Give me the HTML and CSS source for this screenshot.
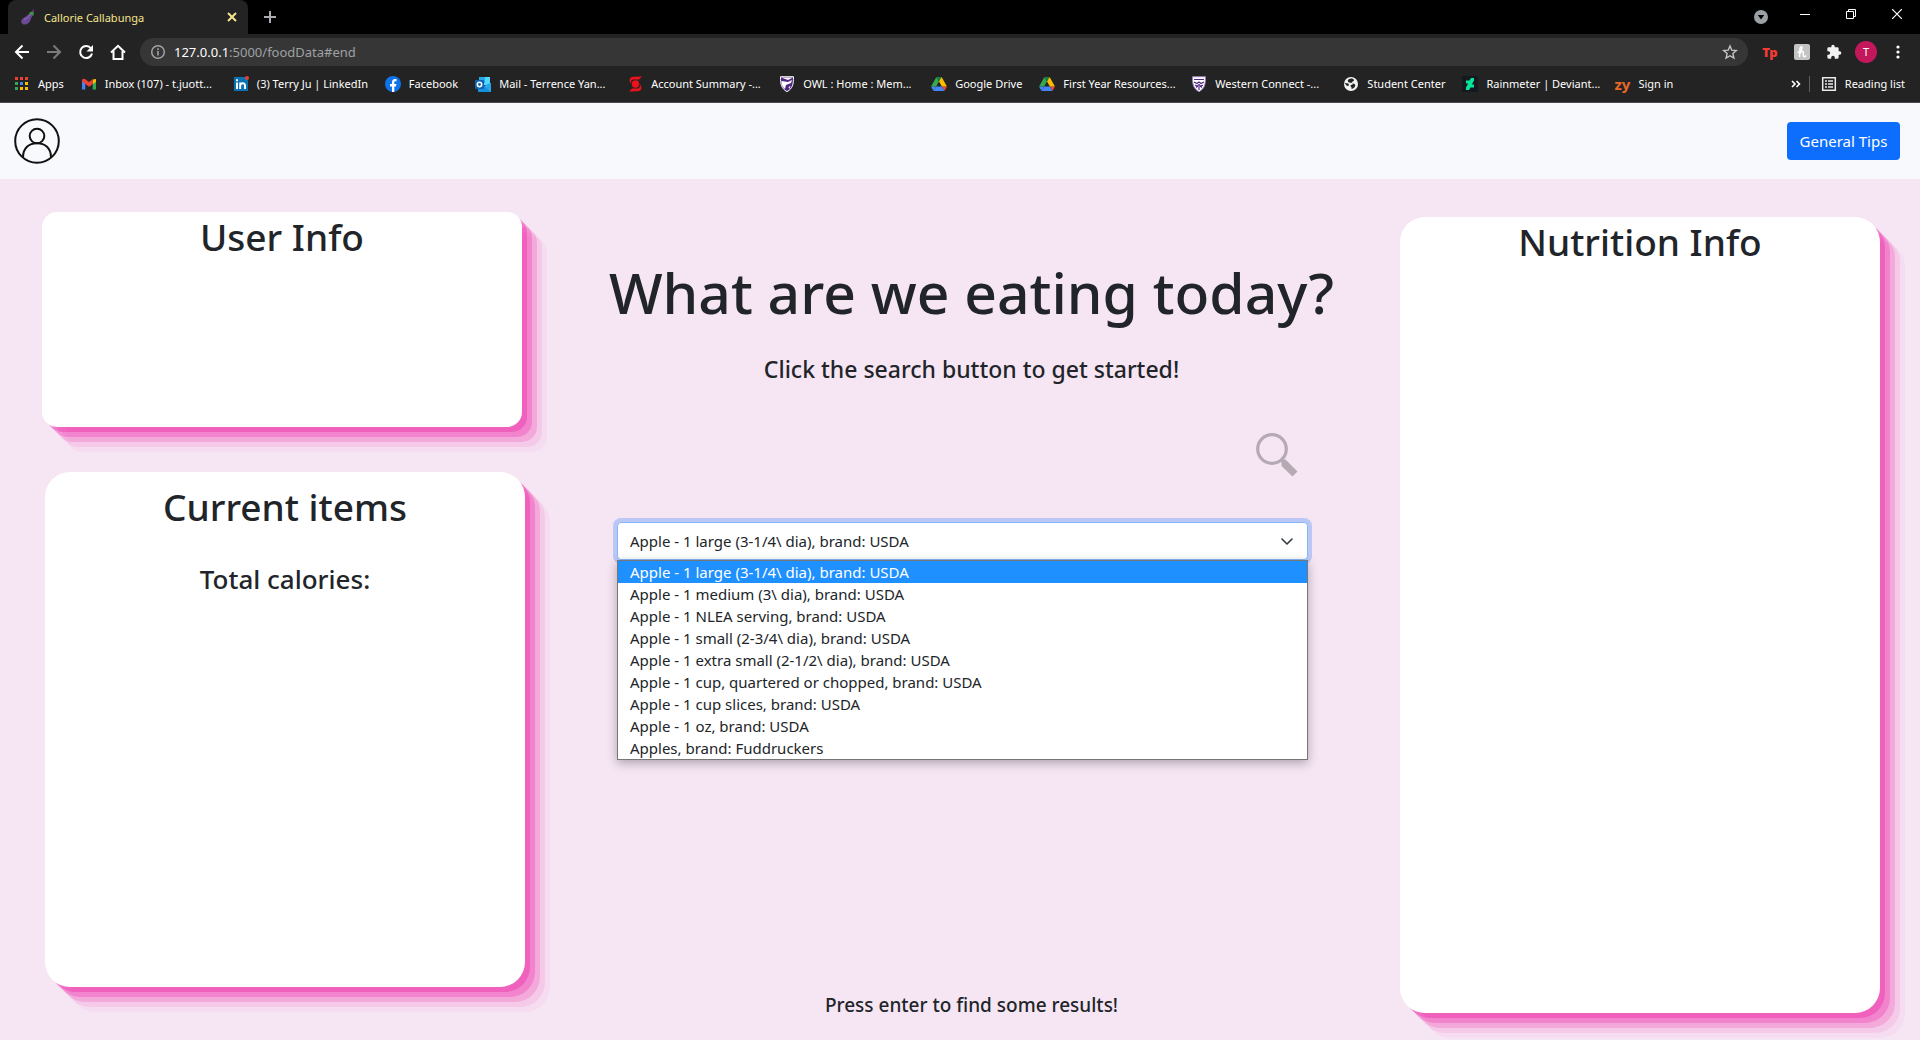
FILE: index.html
```html
<!DOCTYPE html>
<html lang="en">
<head>
<meta charset="utf-8">
<title>Callorie Callabunga</title>
<link rel="stylesheet" href="styles.css">
</head>
<body>
<!-- browser window -->
<div class="browser">
  <div class="tabstrip">
    <div class="tab">
      <svg width="16" height="16" viewBox="0 0 16 16"><path d="M11 3C9 4 8.500 6 6 7.500C3 9 .8 10.500 1.200 13C1.700 15.800 5.500 16.300 8 14.500C11 12.300 10.500 9.500 12 7.500C13 6 13.500 5 12.800 4Z" fill="#6a4a94"/><path d="M4 10.500C6 9.500 8.500 8.500 10 5.500" stroke="#9070b8" fill="none"/><path d="M9.500 3.500L13.500 2L13.800 7L12 5.500L10.500 6Z" fill="#3e9b3b"/><path d="M12.500 3L13.500 .5" stroke="#6d2b7a" stroke-width="1.500"/></svg>
      <span class="tab-title">Callorie Callabunga</span>
      <button class="tab-close" aria-label="Close tab"><svg width="10" height="10" viewBox="0 0 10 10"><path d="M1 1l8 8M9 1L1 9" stroke="#f5e58d" stroke-width="2"/></svg></button>
    </div>
    <button class="new-tab" aria-label="New tab"><svg width="12" height="12" viewBox="0 0 12 12"><path d="M6 0v12M0 6h12" stroke="#a9adb2" stroke-width="2"/></svg></button>
    <button class="tab-search" aria-label="Search tabs"><svg width="14" height="14" viewBox="0 0 14 14"><circle cx="7" cy="7" r="7" fill="#9aa0a6"/><path d="M3.800 5h6.400L7 9.500z" fill="#000"/></svg></button>
    <div class="window-buttons">
      <button aria-label="Minimize"><svg width="10" height="10" viewBox="0 0 10 10"><path d="M0 5.500h10" stroke="#fff"/></svg></button>
      <button aria-label="Restore"><svg width="10" height="10" viewBox="0 0 10 10"><path d="M.5 2.500h7v7h-7zM2.500 2.500v-2h7v7h-2" stroke="#fff" fill="none"/></svg></button>
      <button aria-label="Close"><svg width="10" height="10" viewBox="0 0 10 10"><path d="M0 0l10 10M10 0L0 10" stroke="#fff" stroke-width="1.200"/></svg></button>
    </div>
  </div>

  <div class="toolbar">
    <div class="tools">
      <button aria-label="Back"><svg width="16" height="16" viewBox="0 0 16 16"><path d="M15 8H2.500M8.500 1.500L2 8l6.500 6.500" stroke="#fff" stroke-width="2" fill="none"/></svg></button>
      <button aria-label="Forward"><svg width="16" height="16" viewBox="0 0 16 16"><path d="M1 8h12.500M7.500 1.500L14 8l-6.500 6.500" stroke="#7b7b7b" stroke-width="2" fill="none"/></svg></button>
      <button aria-label="Reload"><svg width="16" height="16" viewBox="0 0 16 16"><path d="M13 4.500A6 6 0 1 0 14 9.500" stroke="#fff" stroke-width="2" fill="none"/><path d="M15 1v6.500H8.500z" fill="#fff"/></svg></button>
      <button aria-label="Home"><svg width="16" height="16" viewBox="0 0 16 16"><path d="M1 8.500L8 1.800l7 6.700M3.500 7v8h9V7" stroke="#fff" stroke-width="2" fill="none"/></svg></button>
    </div>
    <div class="omnibox">
      <svg width="16" height="16" viewBox="0 0 16 16"><circle cx="8" cy="8" r="6.300" stroke="#a0a3a7" stroke-width="1.500" fill="none"/><path d="M8 7v4.500M8 4.200v1.700" stroke="#a0a3a7" stroke-width="1.600"/></svg>
      <label class="host" for="address">127.0.0.1</label>
      <input class="address" id="address" type="text" value=":5000/foodData#end">
      <button class="star" aria-label="Bookmark this tab"><svg width="16" height="16" viewBox="0 0 16 16"><path d="M8 2l1.800 4.200 4.500.4-3.400 3 1 4.400L8 11.700 4.100 14l1-4.400-3.400-3 4.500-.4z" stroke="#c4c7ca" stroke-width="1.400" fill="none"/></svg></button>
    </div>
    <div class="tools">
      <button class="tp" aria-label="Tp extension">Tp</button>
      <button aria-label="Honey"><svg width="16" height="16" viewBox="0 0 16 16"><rect width="16" height="16" rx="2" fill="#c3c3c3"/><path d="M3.500 8.500C7 7.500 9 3.500 7.500 2.800C6 2.300 5.500 6 5.500 13M5.500 10.500C6.500 7 9.300 6.500 9.300 8.500V11c0 2.300 1.700 2 2.700.5" stroke="#fff" stroke-width="1.500" fill="none"/></svg></button>
      <button aria-label="Extensions"><svg width="16" height="16" viewBox="0 0 24 24"><path d="M20.500 11H19V7a2 2 0 0 0-2-2h-4V3.500a2.500 2.500 0 0 0-5 0V5H4a2 2 0 0 0-2 2v3.800h1.500a2.700 2.700 0 0 1 0 5.400H2V20a2 2 0 0 0 2 2h3.800v-1.500a2.700 2.700 0 0 1 5.400 0V22H17a2 2 0 0 0 2-2v-4h1.500a2.500 2.500 0 0 0 0-5z" fill="#f1f1f1"/></svg></button>
      <button aria-label="Profile"><span class="avatar">T</span></button>
      <button aria-label="Menu"><svg width="4" height="14" viewBox="0 0 4 14"><circle cx="2" cy="2" r="1.600" fill="#fff"/><circle cx="2" cy="7" r="1.600" fill="#fff"/><circle cx="2" cy="12" r="1.600" fill="#fff"/></svg></button>
    </div>
  </div>

  <nav class="bookmarks">
    <a href="#"><svg width="16" height="16" viewBox="0 0 16 16"><path d="M1 1h3v3H1zM6 1h3v3H6zM11 1h3v3h-3z" fill="#ea4335"/><path d="M1 6h3v3H1zM1 11h3v3H1z" fill="#34a853"/><path d="M6 6h3v3H6z" fill="#4285f4"/><path d="M6 11h3v3H6zM11 6h3v3h-3zM11 11h3v3h-3z" fill="#fbbc05"/></svg><span>Apps</span></a>
    <a href="#" class="long"><svg width="16" height="16" viewBox="0 0 16 16"><path d="M1 4v9.500h3.300V6z" fill="#4285f4"/><path d="M15 4v9.500h-3.300V6z" fill="#34a853"/><path d="M11.700 3.500L15 3v2.700l-3.300 2.500z" fill="#fbbc04"/><path d="M1 4.500C1 2.500 3 2.200 4.300 3.300L8 6l3.700-2.700V8L8 10.700 1 5.500z" fill="#ea4335"/></svg><span>Inbox (107) - t.juott...</span></a>
    <a href="#" class="long"><svg width="16" height="16" viewBox="0 0 16 16"><rect x="1" y="1" width="14" height="14" fill="#0a71b3"/><path d="M4 6.500V13M4 3.200v2M7.200 6.500V13M7.200 9.500C7.200 7 12 6 12 9.500V13" stroke="#fff" stroke-width="1.900" fill="none"/><circle cx="14" cy="2" r="2" fill="#e8402f"/></svg><span>(3) Terry Ju | LinkedIn</span></a>
    <a href="#"><svg width="16" height="16" viewBox="0 0 16 16"><circle cx="8" cy="8" r="8" fill="#0f73ea"/><path d="M7 16v-5.500H5V8h2V6.300C7 4 8.300 3 10 3l1.500.1v2.100h-1c-1 0-1.200.5-1.200 1.300V8h2.100l-.4 2.500H9.300V16z" fill="#fff"/></svg><span>Facebook</span></a>
    <a href="#" class="long"><svg width="16" height="16" viewBox="0 0 16 16"><path d="M4 1h11v8H4z" fill="#50d9ff"/><path d="M4 1h6v6H4z" fill="#28a8ea"/><path d="M3 8l6 2 7-3v9H3z" fill="#1490df"/><path d="M9 10l7-3v9z" fill="#28a8ea"/><rect y="4" width="9" height="9" rx="1" fill="#0f63b5"/><circle cx="4.500" cy="8.500" r="2.200" stroke="#fff" stroke-width="1.500" fill="none"/></svg><span>Mail - Terrence Yan...</span></a>
    <a href="#" class="long"><svg width="16" height="16" viewBox="0 0 16 16"><path d="M15 .5l-3 3H6.500C4 3.500 3.500 6 4.500 8C1.500 5.500 2 .7 6.500.7zM2 15.500l3-3h5.500c2.500 0 3-2.500 2-4.500c3 2.500 2.500 7.300-2 7.300z" fill="#ec111a"/><circle cx="8.500" cy="8" r="3.700" fill="#ec111a"/></svg><span>Account Summary -...</span></a>
    <a href="#" class="long"><svg width="16" height="16" viewBox="0 0 16 16"><path d="M1.500.7h13c0 7.300-.5 11.500-6.500 15C2 12.200 1.500 8 1.500.7z" fill="#4f2683" stroke="#fff"/><path d="M2 1.500h12L9 4zM2.500 5l6.500 1 4-2-1 3-5 2-1 4C3 11 2.500 8 2.500 5zM9.500 11l2-1-1 3z" fill="#fff"/></svg><span>OWL : Home : Mem...</span></a>
    <a href="#"><svg width="16" height="16" viewBox="0 0 87.300 90"><path d="M6.600 72.900l3.850 6.650c.8 1.400 1.950 2.500 3.300 3.300L27.500 59H0c0 1.550.4 3.100 1.200 4.500z" fill="#4285f4"/><path d="M43.650 31L29.900 7.200c-1.350.8-2.500 1.900-3.300 3.300L1.200 54.500A9 9 0 0 0 0 59h27.500z" fill="#34a853"/><path d="M73.550 82.800c1.350-.8 2.500-1.900 3.300-3.300L86.100 63.500c.8-1.400 1.200-2.950 1.200-4.500H59.800l5.850 11.500z" fill="#ea4335"/><path d="M43.650 31L57.400 7.200C56.050 6.400 54.500 6 52.900 6H34.400c-1.600 0-3.150.45-4.500 1.200z" fill="#188038"/><path d="M59.800 59H27.500L13.750 82.800c1.350.8 2.900 1.200 4.500 1.200h50.800c1.600 0 3.150-.45 4.500-1.200z" fill="#4285f4"/><path d="M73.400 32.500L60.700 10.500c-.8-1.400-1.950-2.500-3.300-3.300L43.650 31 59.800 59h27.450c0-1.550-.4-3.100-1.200-4.500z" fill="#fbbc04"/></svg><span>Google Drive</span></a>
    <a href="#" class="long"><svg width="16" height="16" viewBox="0 0 87.300 90"><path d="M6.600 72.900l3.850 6.650c.8 1.400 1.950 2.500 3.300 3.300L27.500 59H0c0 1.550.4 3.100 1.200 4.500z" fill="#4285f4"/><path d="M43.650 31L29.900 7.200c-1.350.8-2.500 1.900-3.300 3.300L1.200 54.500A9 9 0 0 0 0 59h27.500z" fill="#34a853"/><path d="M73.550 82.800c1.350-.8 2.500-1.900 3.300-3.300L86.100 63.500c.8-1.400 1.200-2.950 1.200-4.500H59.800l5.850 11.500z" fill="#ea4335"/><path d="M43.650 31L57.400 7.200C56.050 6.400 54.500 6 52.900 6H34.400c-1.600 0-3.150.45-4.500 1.200z" fill="#188038"/><path d="M59.800 59H27.500L13.750 82.800c1.350.8 2.900 1.200 4.500 1.200h50.800c1.600 0 3.150-.45 4.500-1.200z" fill="#4285f4"/><path d="M73.400 32.500L60.700 10.500c-.8-1.400-1.950-2.500-3.300-3.300L43.650 31 59.800 59h27.450c0-1.550-.4-3.100-1.200-4.500z" fill="#fbbc04"/></svg><span>First Year Resources...</span></a>
    <a href="#" class="long"><svg width="16" height="16" viewBox="0 0 16 16"><path d="M1.500.7h13c0 7.300-.5 11.500-6.500 15C2 12.200 1.500 8 1.500.7z" fill="#fff" stroke="#9a86b8"/><path d="M3 3.500h10M3 6l3 1.500L8 6l2 1.500L13 6M4 9l4 2 4-2M5 11.500l3-3 3 3M8 11v3" stroke="#4f2683" stroke-width="1.200" fill="none"/></svg><span>Western Connect -...</span></a>
    <a href="#"><svg width="16" height="16" viewBox="0 0 16 16"><circle cx="8" cy="8" r="7" fill="#f1f3f4"/><path d="M8 2.500c-3 .5-4 2-2.500 3.500s4 0 4.500 1.500-3 1-2.500 2.500 1.500 1 1 3c2.500-.5 4.500-3 3.500-4.500S9 8 9 6.500s2.500-1 2-2.500S9 2.500 8 2.500zM1.500 7l4 .5.500 2-2 .5z" fill="#232323"/></svg><span>Student Center</span></a>
    <a href="#" class="long"><svg width="16" height="16" viewBox="0 0 16 16"><rect width="16" height="16" fill="#151a20"/><path d="M12 2v2.500L9.800 8.500H12v3H8.500L7 14H4v-2.500l2.200-4H4v-3h3.500L9 2z" fill="#06e59a"/></svg><span>Rainmeter | Deviant...</span></a>
    <a href="#"><b class="zy">zy</b><span>Sign in</span></a>
    <div class="bookmarks-end">
      <button class="more" aria-label="More bookmarks"><svg width="10" height="8" viewBox="0 0 10 8"><path d="M1 1l3 3-3 3M5.500 1l3 3-3 3" stroke="#fff" stroke-width="1.600" fill="none"/></svg></button>
      <a href="#" class="reading"><svg width="16" height="16" viewBox="0 0 16 16"><path d="M1.700 1.700h12.600v12.600H1.700z" stroke="#e8eaed" stroke-width="1.500" fill="none"/><path d="M4 5h2M7 5h5M4 8h2M7 8h5M4 11h2M7 11h5" stroke="#e8eaed" stroke-width="1.500"/></svg><span>Reading list</span></a>
    </div>
  </nav>
</div>

<!-- page -->
<header class="navbar">
  <a href="#" class="user-icon" aria-label="User"><svg width="46" height="46" viewBox="0 0 46 46" fill="none" stroke="#111" stroke-width="2"><circle cx="23" cy="23" r="21.800"/><circle cx="23" cy="18" r="7.300"/><path d="M9 39.500C9 30 15 25.300 23 25.300S37 30 37 39.500"/></svg></a>
  <button class="tips">General Tips</button>
</header>

<main class="page">
  <div class="left">
    <section class="card user-info">
      <h1>User Info</h1>
    </section>
    <section class="card items">
      <h1>Current items</h1>
      <h3>Total calories:</h3>
    </section>
  </div>

  <div class="middle">
    <h1 class="title">What are we eating today?</h1>
    <h4 class="subtitle">Click the search button to get started!</h4>
    <button class="search" aria-label="Search"><svg width="44" height="44" viewBox="0 0 44 44"><circle cx="17" cy="16" r="14.300" stroke="#b5aab4" stroke-width="3.200" fill="none"/><path d="M26 26l3 3" stroke="#b5aab4" stroke-width="4"/><path d="M30.500 26.500L42.500 38.500l-5 5L26.500 33v-3.500z" fill="#b5aab4"/></svg></button>
    <div class="food">
      <select class="food-select" id="food" aria-label="Food">
        <option>Apple - 1 large (3-1/4\ dia), brand: USDA</option>
      </select>
      <svg class="chevron" width="16" height="16" viewBox="0 0 16 16"><path d="M3 6l5 5 5-5" fill="none" stroke="#343a40" stroke-width="1.600" stroke-linecap="round" stroke-linejoin="round"/></svg>
      <ul class="food-list" role="listbox" aria-label="Foods">
        <li role="option" class="selected" aria-selected="true">Apple - 1 large (3-1/4\ dia), brand: USDA</li>
        <li role="option">Apple - 1 medium (3\ dia), brand: USDA</li>
        <li role="option">Apple - 1 NLEA serving, brand: USDA</li>
        <li role="option">Apple - 1 small (2-3/4\ dia), brand: USDA</li>
        <li role="option">Apple - 1 extra small (2-1/2\ dia), brand: USDA</li>
        <li role="option">Apple - 1 cup, quartered or chopped, brand: USDA</li>
        <li role="option">Apple - 1 cup slices, brand: USDA</li>
        <li role="option">Apple - 1 oz, brand: USDA</li>
        <li role="option">Apples, brand: Fuddruckers</li>
      </ul>
    </div>
    <h5 class="hint">Press enter to find some results!</h5>
  </div>

  <section class="card nutrition">
    <h1>Nutrition Info</h1>
  </section>
</main>
</body>
</html>
```
FILE: styles.css
```css
* {
  box-sizing: border-box;
}

body {
  margin: 0;
  min-height: 100vh;
  display: flex;
  flex-direction: column;
  background-color: #f6e6f4;
  color: #212529;
  font-family: "Noto Sans", sans-serif;
  font-size: 15px;
}

h1, h3, h4, h5 {
  margin: 0;
  font-weight: 500;
  text-align: center;
}

button {
  padding: 0;
  border: none;
  background: none;
  font-family: inherit;
  cursor: pointer;
}

svg {
  display: block;
  flex: none;
}

/* browser */
.browser {
  background-color: #232323;
  border-bottom: 1px solid #4c4d50;
  color: #fff;
  font-size: 11px;
}

.tabstrip {
  display: flex;
  align-items: center;
  height: 34px;
  padding-left: 8px;
  background-color: #000;
}

.tab {
  display: flex;
  align-items: center;
  gap: 8px;
  width: 240px;
  height: 34px;
  padding: 0 11px 0 12px;
  border-radius: 8px 8px 0 0;
  background-color: #232323;
  color: #f5e58d;
}

.tab-title {
  flex: 1;
}

.new-tab {
  margin-left: 16px;
}

.tab-search {
  margin-left: auto;
}

.window-buttons {
  display: flex;
  align-self: flex-start;
  margin-left: 14px;
}

.window-buttons button {
  display: flex;
  align-items: center;
  justify-content: center;
  width: 46px;
  height: 28px;
}

.toolbar {
  display: flex;
  align-items: center;
  gap: 6px;
  height: 36px;
  padding: 0 6px;
}

.tools {
  display: flex;
}

.tools button {
  display: flex;
  align-items: center;
  justify-content: center;
  width: 32px;
  height: 28px;
}

.tools .tp {
  color: #f23c35;
  font-size: 13px;
  font-weight: 900;
}

.avatar {
  width: 22px;
  flex: none;
  border-radius: 50%;
  background-color: #c2185b;
  color: #fff;
  font-size: 11px;
  line-height: 22px;
}

.omnibox {
  display: flex;
  align-items: center;
  flex: 1;
  height: 28px;
  padding: 0 10px;
  border-radius: 14px;
  background-color: #363636;
  font-size: 13px;
}

.host {
  margin-left: 8px;
}

.address {
  flex: 1;
  padding: 0;
  border: none;
  outline: none;
  background: none;
  color: #9fa1a4;
  font-family: inherit;
  font-size: 13px;
}

.bookmarks {
  display: flex;
  align-items: center;
  gap: 16px;
  height: 32px;
  padding: 0 14px 5px;
}

.bookmarks a {
  display: flex;
  align-items: center;
  gap: 8px;
  padding-right: 1px;
  color: #fff;
  text-decoration: none;
  white-space: nowrap;
}

.bookmarks .long {
  width: 136px;
}

.zy {
  width: 16px;
  color: #e8682a;
  font-size: 15px;
  line-height: 16px;
}

.bookmarks-end {
  display: flex;
  align-items: center;
  gap: 8px;
  margin-left: auto;
}

.reading {
  padding-left: 11px;
  border-left: 1px solid #5f6063;
}

/* nav */
.navbar {
  display: flex;
  align-items: center;
  justify-content: space-between;
  height: 76px;
  padding: 0 20px 0 14px;
  background-color: #f8f9fc;
}

.tips {
  width: 113px;
  height: 38px;
  border-radius: 4px;
  background-color: #0d6efd;
  color: #fff;
  font-size: 15px;
}

/* layout */
.page {
  display: grid;
  grid-template-columns: calc(25vw + 45px) 1fr calc(25vw + 40px);
  flex: 1;
}

.left {
  display: flex;
  flex-direction: column;
  gap: 45px;
  padding: 33px 0 53px 42px;
}

.card {
  width: 25vw;
  border-radius: 25px;
  background-color: #fff;
  box-shadow: rgba(240, 46, 170, 0.4) 5px 5px, rgba(240, 46, 170, 0.3) 10px 10px, rgba(240, 46, 170, 0.2) 15px 15px, rgba(240, 46, 170, 0.1) 20px 20px, rgba(240, 46, 170, 0.05) 25px 25px;
}

.card h1 {
  font-size: 37px;
  line-height: 50px;
}

.card h3 {
  margin-top: 31px;
  font-size: 26px;
  line-height: 32px;
}

.user-info {
  min-height: 215px;
  border-radius: 15px;
}

.items {
  flex: 1;
  margin-left: 3px;
  padding-top: 10px;
}

.nutrition {
  margin: 38px 0 27px;
}

.middle {
  display: flex;
  flex-direction: column;
  padding: 79px 92px 23px;
}

.title, .subtitle, .hint {
  margin: 0 -92px;
  padding-left: 18px;
}

.title {
  font-size: 57px;
  line-height: 68px;
}

.subtitle {
  margin-top: 29px;
  font-size: 23px;
  line-height: 28px;
}

.search {
  align-self: flex-end;
  margin: 50px 9px 45px 0;
}

.food {
  position: relative;
}

.food-select {
  display: block;
  width: 100%;
  height: 38px;
  padding: 0 36px 0 12px;
  border: 1px solid #86b7fe;
  border-radius: 4px;
  outline: none;
  background-color: #fff;
  box-shadow: 0 0 0 4px rgba(13, 110, 253, 0.25);
  color: #212529;
  font-family: inherit;
  font-size: 15px;
  -webkit-appearance: none;
  appearance: none;
}

.chevron {
  position: absolute;
  top: 11px;
  right: 13px;
}

.food-list {
  position: absolute;
  top: 100%;
  left: 0;
  right: 0;
  margin: 0;
  padding: 0;
  border: 1px solid #767676;
  background-color: #fff;
  box-shadow: 0 3px 10px rgba(0, 0, 0, 0.3);
  list-style: none;
}

.food-list li {
  padding: 0 12px;
  line-height: 22px;
}

.food-list .selected {
  background-color: #1e90ff;
  color: #fff;
}

.hint {
  margin-top: auto;
  font-size: 19px;
  line-height: 24px;
}
```
